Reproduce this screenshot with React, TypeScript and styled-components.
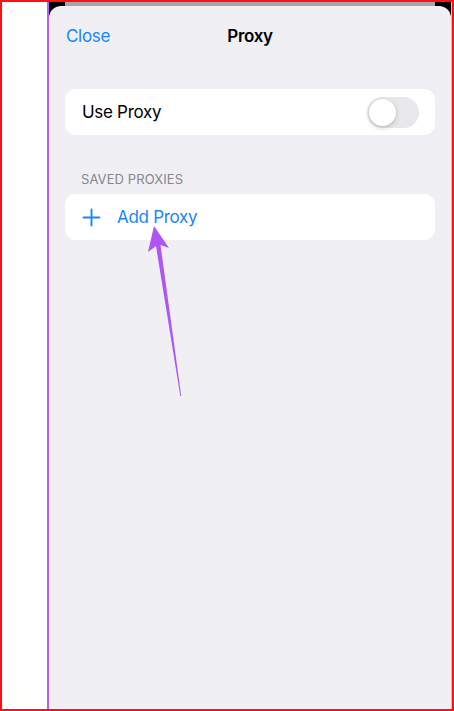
import React, { useState } from "react";
import styled, { createGlobalStyle } from "styled-components";

const Global = createGlobalStyle`
  html, body { margin: 0; padding: 0; background: #ffffff; }
  body { font-family: Inter, "Noto Sans", "Liberation Sans", sans-serif; -webkit-font-smoothing: antialiased; }
  * { box-sizing: border-box; }
`;

const Frame = styled.div`
  position: relative;
  width: 454px;
  height: 711px;
  border: 2px solid #ff1010;
  display: flex;
  background: #ffffff;
  overflow: hidden;
`;

const Blank = styled.div`
  width: 45px;
  background: #ffffff;
`;

const Edge = styled.div<{ $w: number; $c: string }>`
  width: ${(p) => p.$w}px;
  background: ${(p) => p.$c};
`;

const Screen = styled.div`
  flex: 1;
  display: flex;
  flex-direction: column;
  background: #000000;
`;

const BackStrip = styled.div`
  height: 4px;
  display: flex;
  justify-content: center;
`;

const BackSheet = styled.div`
  width: 370px;
  height: 4px;
  background: #a7a7ab;
`;

const Sheet = styled.div`
  flex: 1;
  background: #efeff4;
  border-radius: 12px 12px 0 0;
  padding: 0 16px;
  display: flex;
  flex-direction: column;
`;

const Header = styled.div`
  height: 59px;
  display: grid;
  grid-template-columns: 1fr auto 1fr;
  align-items: center;
`;

const CloseBtn = styled.span`
  color: #1a84fb;
  font-size: 17px;
  letter-spacing: -0.3px;
  padding-left: 1px;
`;

const Title = styled.span`
  color: #000000;
  font-size: 17px;
  font-weight: 600;
  letter-spacing: -0.3px;
`;

const Card = styled.div<{ $top: number }>`
  margin-top: ${(p) => p.$top}px;
  height: 46px;
  background: #ffffff;
  border-radius: 11px;
  display: flex;
  align-items: center;
  padding: 0 16px 0 17px;
`;

const Label = styled.span`
  flex: 1;
  font-size: 17px;
  letter-spacing: -0.3px;
  color: #000000;
`;

const SectionTitle = styled.div`
  margin-top: 36px;
  padding-left: 16px;
  font-size: 13px;
  color: #86868b;
  letter-spacing: 0.1px;
  line-height: 16px;
`;

const Switch = styled.div<{ $on: boolean }>`
  position: relative;
  width: 52px;
  height: 31px;
  border-radius: 16px;
  background: ${(p) => (p.$on ? "#34c759" : "#e8e8ea")};
  cursor: pointer;
`;

const Knob = styled.div<{ $on: boolean }>`
  position: absolute;
  top: 2px;
  left: ${(p) => (p.$on ? "23px" : "2px")};
  width: 27px;
  height: 27px;
  border-radius: 50%;
  background: #ffffff;
  box-shadow: 0 2px 5px rgba(0, 0, 0, 0.18), 0 0 0 0.5px rgba(0, 0, 0, 0.06);
`;

const PlusIcon = styled.svg`
  width: 19px;
  height: 19px;
  margin-right: 16px;
  flex-shrink: 0;
`;

const AddLabel = styled.span`
  font-size: 17px;
  letter-spacing: -0.3px;
  color: #1a84fb;
`;

const ArrowLayer = styled.svg`
  position: absolute;
  left: -2px;
  top: -2px;
  pointer-events: none;
`;

export default function App() {
  const [on, setOn] = useState(false);
  return (
    <>
      <Global />
      <Frame>
        <Blank />
        <Edge $w={2} $c="#b65cf7" />
        <Screen>
          <BackStrip>
            <BackSheet />
          </BackStrip>
          <Sheet>
            <Header>
              <CloseBtn>Close</CloseBtn>
              <Title>Proxy</Title>
              <span />
            </Header>
            <Card $top={24}>
              <Label>Use Proxy</Label>
              <Switch $on={on} onClick={() => setOn(!on)}>
                <Knob $on={on} />
              </Switch>
            </Card>
            <SectionTitle>SAVED PROXIES</SectionTitle>
            <Card $top={7}>
              <PlusIcon viewBox="0 0 19 19">
                <path d="M9.5 1.5v16M1.5 9.5h16" stroke="#1a84fb" strokeWidth="1.9" strokeLinecap="round" fill="none" />
              </PlusIcon>
              <AddLabel>Add Proxy</AddLabel>
            </Card>
          </Sheet>
        </Screen>
        <Edge $w={1} $c="#c9b8f0" />
        <ArrowLayer width="454" height="711" viewBox="0 0 454 711">
          <polygon points="154,226 169,248 160.5,245 181.2,396 180.3,396 156,246 148,252" fill="#ad55f6" />
        </ArrowLayer>
      </Frame>
    </>
  );
}
